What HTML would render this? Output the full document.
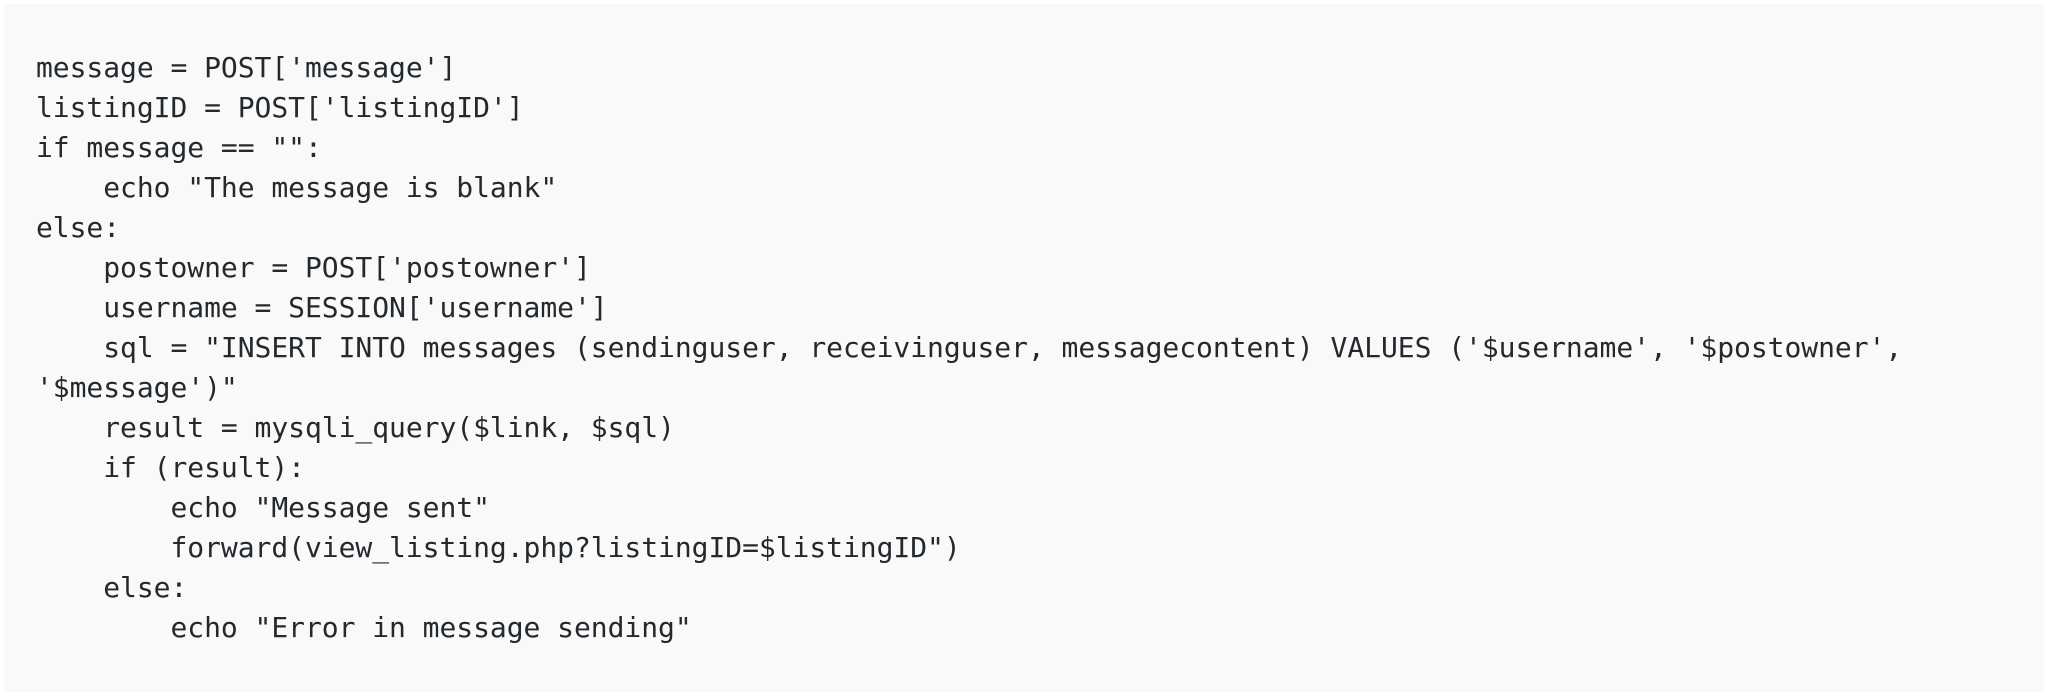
<!DOCTYPE html>
<html><head><meta charset="utf-8"><style>
html,body{margin:0;padding:0;width:2048px;height:696px;background:#fff;overflow:hidden}
.box{position:absolute;left:4px;top:4px;width:2040px;height:688px;background:#f9f9f9;border-radius:6px}
pre{position:absolute;left:36px;top:48px;margin:0;font-family:"DejaVu Sans Mono","Liberation Mono",monospace;font-size:28px;line-height:40px;letter-spacing:-0.045px;color:#24292e;white-space:pre}
</style></head><body>
<div class="box"></div>
<pre>message = POST['message']
listingID = POST['listingID']
if message == "":
    echo "The message is blank"
else:
    postowner = POST['postowner']
    username = SESSION['username']
    sql = "INSERT INTO messages (sendinguser, receivinguser, messagecontent) VALUES ('$username', '$postowner',
'$message')"
    result = mysqli_query($link, $sql)
    if (result):
        echo "Message sent"
        forward(view_listing.php?listingID=$listingID")
    else:
        echo "Error in message sending"</pre>
</body></html>
